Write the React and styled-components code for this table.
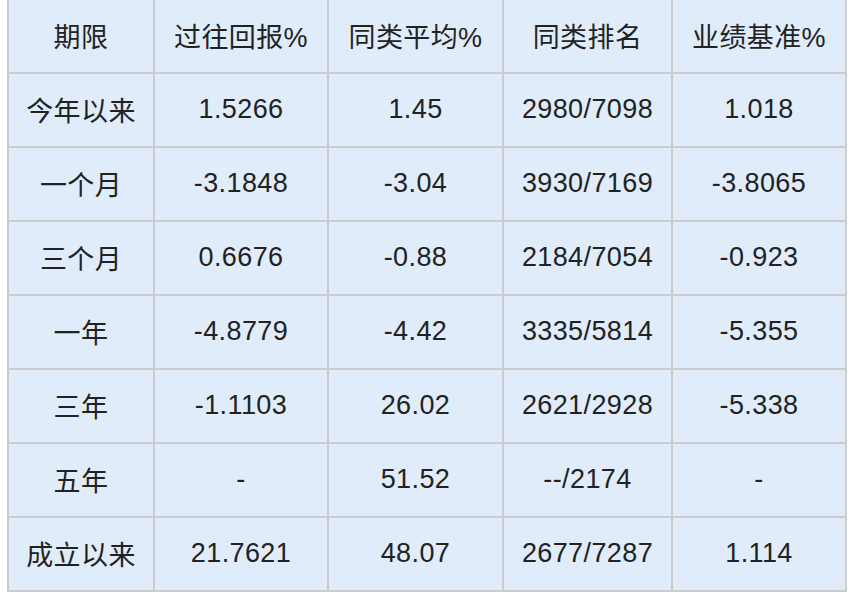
import React from 'react';
import styled, { createGlobalStyle } from 'styled-components';

const GlobalStyle = createGlobalStyle`
  html, body {
    margin: 0;
    padding: 0;
    background: #fff;
  }
`;

const headers = ['期限', '过往回报%', '同类平均%', '同类排名', '业绩基准%'];

const rows = [
  { id: 1, period: '今年以来', ret: '1.5266', avg: '1.45', rank: '2980/7098', base: '1.018' },
  { id: 2, period: '一个月', ret: '-3.1848', avg: '-3.04', rank: '3930/7169', base: '-3.8065' },
  { id: 3, period: '三个月', ret: '0.6676', avg: '-0.88', rank: '2184/7054', base: '-0.923' },
  { id: 4, period: '一年', ret: '-4.8779', avg: '-4.42', rank: '3335/5814', base: '-5.355' },
  { id: 5, period: '三年', ret: '-1.1103', avg: '26.02', rank: '2621/2928', base: '-5.338' },
  { id: 6, period: '五年', ret: '-', avg: '51.52', rank: '--/2174', base: '-' },
  { id: 7, period: '成立以来', ret: '21.7621', avg: '48.07', rank: '2677/7287', base: '1.114' },
];

const App = () => {
  return (
    <>
      <GlobalStyle />
      <Page>
        <Table>
          { headers.map( h => <Cell key={ h }>{ h }</Cell> ) }
          { rows.map( row => (
            <React.Fragment key={ row.id }>
              <Cell>{ row.period }</Cell>
              <Cell>{ row.ret }</Cell>
              <Cell>{ row.avg }</Cell>
              <Cell>{ row.rank }</Cell>
              <Cell>{ row.base }</Cell>
            </React.Fragment>
          ) ) }
        </Table>
      </Page>
    </>
  )
};

const Page = styled.div`
  padding-left: 7px;
  margin-top: -2px;
`;

const Table = styled.div`
  display: grid;
  grid-template-columns: 144px 172px 173px 167px 172px;
  grid-auto-rows: 72px;
  gap: 2px;
  padding: 2px;
  width: max-content;
  background: #cccccc;
`;

const Cell = styled.div`
  display: flex;
  align-items: center;
  justify-content: center;
  padding-bottom: 1px;
  background: #e0ecfa;
  color: #222;
  font-family: "Liberation Sans", "Noto Sans CJK SC", sans-serif;
  font-size: 27px;
  letter-spacing: 0.4px;
`;

export default App;
